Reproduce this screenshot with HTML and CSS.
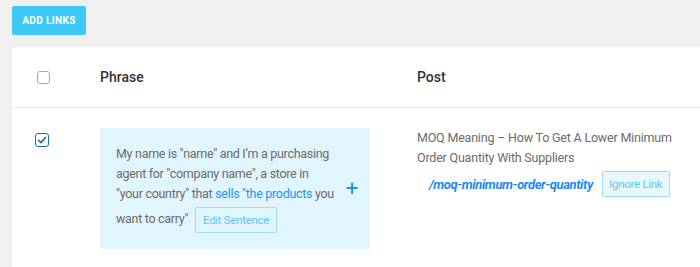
FILE: index.html
```html
<!DOCTYPE html>
<html>
<head>
<meta charset="utf-8">
<link rel="stylesheet" href="styles.css">
</head>
<body>
<div class="toolbar">
  <button class="btn-add">ADD LINKS</button>
</div>
<div class="panel">
  <div class="row head">
    <div class="cell-check"><span class="cb"></span></div>
    <div class="cell-phrase">Phrase</div>
    <div class="cell-post">Post</div>
  </div>
  <div class="row item">
    <div class="cell-check"><span class="cb checked"><svg viewBox="0 0 14 14" width="14" height="14"><path d="M3.5 7.2l2.4 2.4 4.6-5" fill="none" stroke="#1a6fb0" stroke-width="1.6" stroke-linecap="round" stroke-linejoin="round"/></svg></span></div>
    <div class="cell-phrase">
      <div class="phrase-box">
        <div class="phrase-text">My name is "name" and I’m a purchasing agent for "company name", a store in<br>"your country" that <span class="hl">sells "the products</span> you want to carry" <button class="btn-ghost">Edit Sentence</button></div>
        <div class="plus">+</div>
      </div>
    </div>
    <div class="cell-post">
      <div class="post-title">MOQ Meaning – How To Get A Lower Minimum Order Quantity With Suppliers</div>
      <div class="slug-line"><span class="slug">/moq-minimum-order-quantity</span><button class="btn-ghost ignore">Ignore Link</button></div>
    </div>
  </div>
</div>
</body>
</html>
```
FILE: styles.css
```css
html, body {
  margin: 0;
  padding: 0;
  background: #f0f0f0;
  font-family: "Roboto", "Liberation Sans", sans-serif;
  height: 267px;
  overflow: hidden;
}
.toolbar {
  padding: 6px 12px 0;
  height: 47px;
  box-sizing: border-box;
}
.btn-add {
  height: 29px;
  width: 74px;
  border: none;
  border-radius: 2px;
  background: #3cc9f5;
  color: #fff;
  font-family: "Roboto", sans-serif;
  font-weight: 700;
  font-size: 10px;
  letter-spacing: 0.4px;
  padding: 0;
}
.panel {
  background: #fff;
  margin-left: 12px;
  height: 220px;
}
.row {
  display: grid;
  grid-template-columns: 88px 317px 1fr;
}
.head {
  height: 60px;
  align-items: center;
  border-bottom: 1px solid #ececec;
  font-size: 14px;
  font-weight: 500;
  color: #333;
}
.head .cell-check {
  padding-left: 25px;
  padding-top: 4px;
}
.cb {
  display: inline-block;
  width: 13px;
  height: 13px;
  border: 1px solid #a9a9a9;
  border-radius: 3px;
  box-sizing: border-box;
  background: #fff;
}
.cb.checked {
  width: 14px;
  height: 14px;
  border: 1.5px solid #1a6fb0;
  position: relative;
}
.cb.checked svg {
  position: absolute;
  left: -1.5px;
  top: -1.5px;
}
.item {
  padding-top: 20px;
}
.item .cell-check {
  padding-left: 23px;
  padding-top: 4px;
}
.phrase-box {
  width: 270px;
  box-sizing: border-box;
  background: #e1f5fe;
  padding: 16px 0 13px 16px;
  display: flex;
  align-items: center;
  min-height: 120px;
}
.phrase-text {
  width: 226px;
  font-size: 12.5px;
  letter-spacing: -0.3px;
  line-height: 20px;
  color: #6b6b6b;
}
.hl {
  color: #2196f3;
}
.plus {
  width: 16px;
  margin-left: 2px;
  text-align: center;
  color: #1e90ee;
  font-size: 22px;
  font-weight: 400;
  line-height: 1;
  padding-bottom: 3px;
}
.btn-ghost {
  display: inline-block;
  height: 26px;
  padding: 0 7px;
  margin: 3px 0 3px 4px;
  vertical-align: middle;
  border: 1px solid #9fdcf5;
  border-radius: 2px;
  background: transparent;
  color: #5ec8f0;
  font-family: "Roboto", sans-serif;
  font-size: 11.5px;
  letter-spacing: -0.3px;
}
.post-title {
  font-size: 12.5px;
  letter-spacing: -0.2px;
  line-height: 20px;
  color: #6b6b6b;
  width: 272px;
}
.slug-line {
  display: flex;
  align-items: center;
  padding-left: 12px;
  margin-top: 3px;
}
.slug {
  color: #1e88f0;
  font-weight: 700;
  font-style: italic;
  font-size: 13px;
  letter-spacing: -0.4px;
}
.ignore {
  margin: 0 0 0 9px;
  background: #eaf7fd;
  width: 68px;
  padding: 0;
}
```
